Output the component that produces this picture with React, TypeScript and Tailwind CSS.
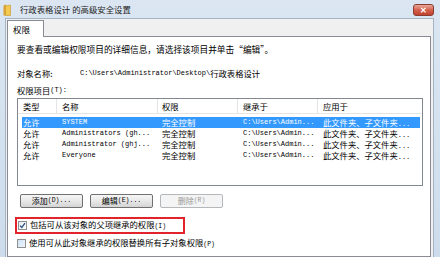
import React from "react";

const cjk = "font-['Noto_Sans_CJK_SC',sans-serif]";
const mono = "font-['Liberation_Mono','Noto_Sans_CJK_SC',monospace]";

const rows = [
  { type: "允许", name: "SYSTEM", perm: "完全控制", from: "C:\\Users\\Admin..." },
  { type: "允许", name: "Administrators (gh...", perm: "完全控制", from: "C:\\Users\\Admin..." },
  { type: "允许", name: "Administrator (ghj...", perm: "完全控制", from: "C:\\Users\\Admin..." },
  { type: "允许", name: "Everyone", perm: "完全控制", from: "C:\\Users\\Admin..." },
];

function Folder() {
  return (
    <svg width="8" height="12" viewBox="0 0 8 12">
      <path d="M0.5 1.5 L3 0.5 L3 11.5 L0.5 11.5 Z" fill="#d9a431" />
      <path d="M2.5 2 L7.5 1 L7.5 11.5 L2.5 11.5 Z" fill="#f4c94f" stroke="#c8962a" strokeWidth="0.6" />
    </svg>
  );
}

function Btn({ children, disabled }: { children: React.ReactNode; disabled?: boolean }) {
  return (
    <div
      className={`w-[63px] h-[14px] flex items-center justify-center rounded-[2px] border text-[8px] ${
        disabled
          ? "border-[#b4b8bb] bg-[#f4f4f4] text-[#9a9a9a]"
          : "border-[#707070] bg-gradient-to-b from-[#f6f6f6] via-[#e8e8e8] to-[#d4d4d4] text-black"
      }`}
    >
      {children}
    </div>
  );
}

export default function App() {
  return (
    <div className={`w-[440px] h-[257px] overflow-hidden bg-gradient-to-b from-[#dbe6f2] to-[#cddcec] flex flex-col ${cjk}`}>
      {/* title bar */}
      <div className="h-[18px] flex items-center shrink-0">
        <div className="ml-[3px] mt-[1px]">
          <Folder />
        </div>
        <span className="ml-[9px] text-[8.4px] text-[#1e1e1e] leading-none">行政表格设计 的高级安全设置</span>
        <div className="ml-auto mr-[6px] mt-[2px] w-[21px] h-[12px] rounded-[3px] border border-[#8a3a2e] bg-gradient-to-b from-[#e9a89a] via-[#d4604d] to-[#c0402c] flex items-center justify-center">
          <span className="text-white text-[8px] font-bold leading-none">✕</span>
        </div>
      </div>

      {/* body */}
      <div className="flex-1 ml-[5px] mr-[6px] bg-[#f0f0f0] border-l border-r border-t border-[#a5b4c5] pl-[1px] pr-[2px] pt-[1px] flex flex-col">
        {/* tab */}
        <div className="relative z-10 w-[37px] h-[17px] bg-white border border-b-0 border-[#898c95] flex items-center pl-[5px] -mb-[1px]">
          <span className="text-[8.5px] leading-none">权限</span>
        </div>

        {/* panel */}
        <div className="flex-1 bg-white border border-[#898c95] pl-[9px] pt-[7px] flex flex-col">
          <div className="h-[12px] flex items-center text-[8.7px] leading-none whitespace-nowrap">
            要查看或编辑权限项目的详细信息，请选择该项目并单击“编辑”。
          </div>

          <div className="mt-[11px] h-[12px] flex items-center text-[8.3px] leading-none">
            <span className="w-[63px]">对象名称:</span>
            <span className={`${mono} text-[7px]`}>C:\Users\Administrator\Desktop\</span>
            <span className="text-[8.3px]">行政表格设计</span>
          </div>

          <div className="mt-[5px] h-[12px] flex items-center text-[8.3px] leading-none">
            权限项目<span className={`${mono} text-[7px]`}>(T):</span>
          </div>

          {/* list */}
          <div className="mt-[2px] w-[406px] h-[88px] border border-[#828790] bg-white flex flex-col">
            <div className="h-[15px] flex text-[8.3px] leading-none border-b border-[#e5e5e5]">
              <div className="w-[39px] pl-[5px] flex items-center border-r border-[#e5e5e5]">类型</div>
              <div className="w-[101px] pl-[5px] flex items-center border-r border-[#e5e5e5]">名称</div>
              <div className="w-[80px] pl-[4px] flex items-center border-r border-[#e5e5e5]">权限</div>
              <div className="w-[80px] pl-[5px] flex items-center border-r border-[#e5e5e5]">继承于</div>
              <div className="w-[104px] pl-[5px] flex items-center">应用于</div>
            </div>
            <div className="mt-[3px] flex flex-col">
              {rows.map((r, i) => (
                <div
                  key={i}
                  className={`h-[11px] flex items-center leading-none ml-[4px] mr-[2px] ${
                    i === 0 ? "bg-[#3399ff] text-white" : "text-black"
                  }`}
                >
                  <div className="w-[35px] pl-[1px] text-[8.3px]">{r.type}</div>
                  <div className={`w-[101px] pl-[5px] ${mono} text-[7px]`}>{r.name}</div>
                  <div className="w-[80px] pl-[4px] text-[8.3px]">{r.perm}</div>
                  <div className={`w-[80px] pl-[5px] ${mono} text-[7px]`}>{r.from}</div>
                  <div className="w-[100px] pl-[5px] text-[8.3px] whitespace-nowrap">
                    此文件夹、子文件夹<span className={`${mono} text-[7px]`}>...</span>
                  </div>
                </div>
              ))}
            </div>
          </div>

          {/* buttons */}
          <div className="mt-[8px] ml-[3px] flex gap-[7px] leading-none">
            <Btn>
              添加<span className={`${mono} text-[6.5px]`}>(D)...</span>
            </Btn>
            <Btn>
              编辑<span className={`${mono} text-[6.5px]`}>(E)...</span>
            </Btn>
            <Btn disabled>
              删除<span className={`${mono} text-[6.5px]`}>(R)</span>
            </Btn>
          </div>

          {/* checkboxes */}
          <div className="mt-[9px] -ml-[2px] w-[170px] h-[17px] border-2 border-[#e3232b] flex items-center pl-[1px]">
            <div className="w-[9px] h-[9px] border border-[#8e8f8f] bg-gradient-to-br from-[#e6ecf2] to-white flex items-center justify-center">
              <svg width="7" height="7" viewBox="0 0 7 7">
                <path d="M1 3.6 L2.8 5.4 L6 1.2" stroke="#2b4f7e" strokeWidth="1.3" fill="none" />
              </svg>
            </div>
            <span className="ml-[3px] text-[8.3px] leading-none">
              包括可从该对象的父项继承的权限<span className={`${mono} text-[6.5px]`}>(I)</span>
            </span>
          </div>
          <div className="mt-[3px] h-[12px] flex items-center">
            <div className="w-[9px] h-[9px] border border-[#8e8f8f] bg-gradient-to-br from-[#cfe2f5] to-[#eef5fc]" />
            <span className="ml-[3px] text-[8.3px] leading-none">
              使用可从此对象继承的权限替换所有子对象权限<span className={`${mono} text-[6.5px]`}>(P)</span>
            </span>
          </div>
        </div>
      </div>
    </div>
  );
}
